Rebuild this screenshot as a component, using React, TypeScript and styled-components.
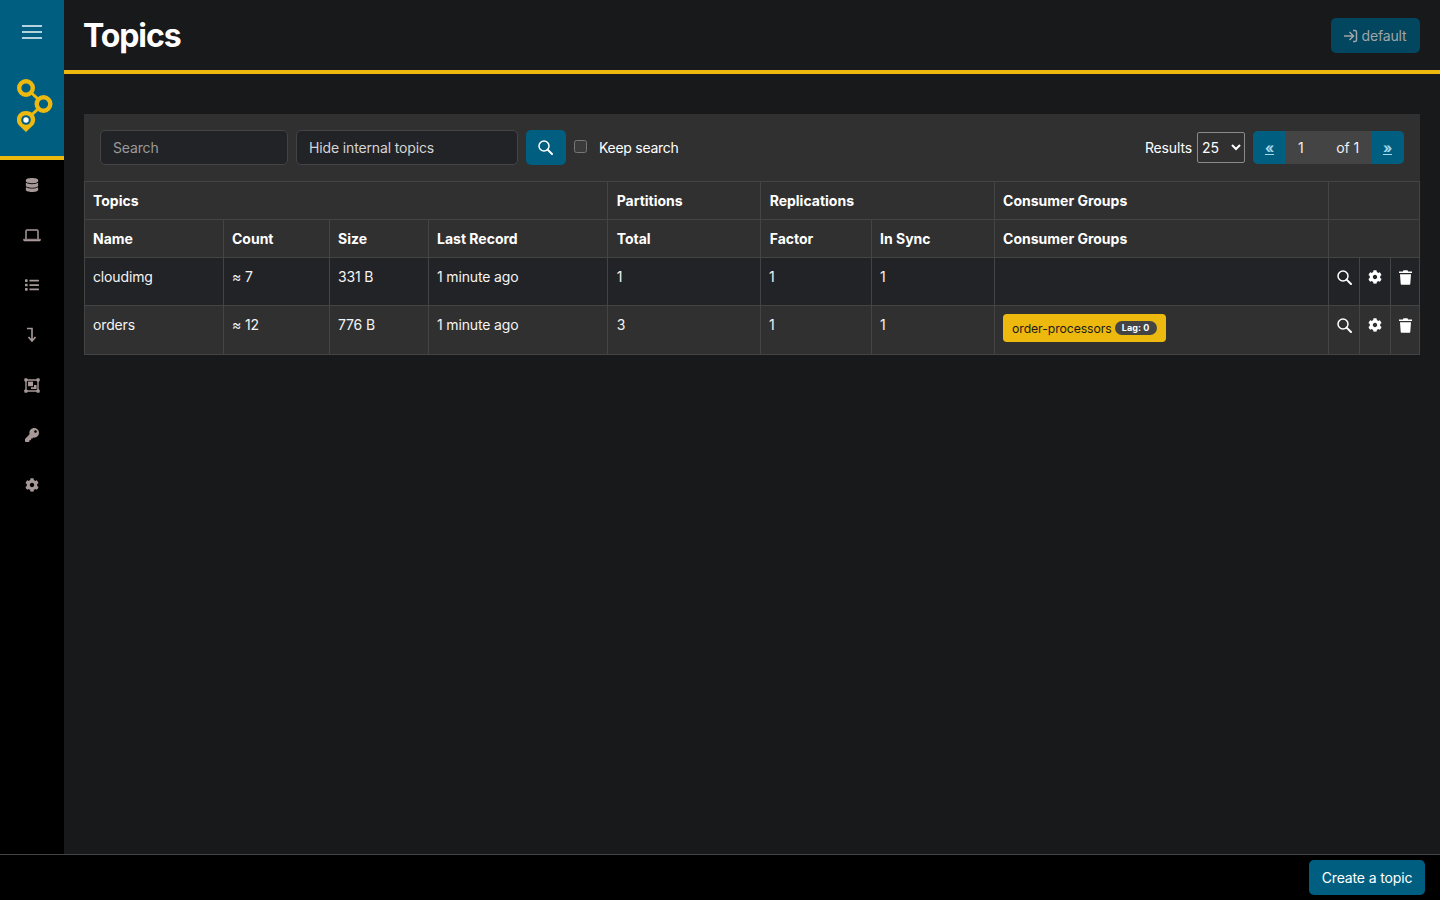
import React from "react";
import styled, { createGlobalStyle } from "styled-components";
import { FaDatabase, FaList, FaKey, FaCog } from "react-icons/fa";

const Global = createGlobalStyle`
  html, body { margin: 0; padding: 0; height: 100%; }
  body { background: #18191b; color: #fff; font-family: Inter, "Liberation Sans", sans-serif; font-size: 14px; line-height: 21px; letter-spacing: -0.14px; }
  * { box-sizing: border-box; }
`;

const Page = styled.div`
  display: grid;
  grid-template-columns: 64px 1fr;
  grid-template-rows: 854px 46px;
  width: 1440px;
  height: 900px;
  overflow: hidden;
`;

const Sidebar = styled.nav`
  background: #000;
  display: flex;
  flex-direction: column;
`;

const Brand = styled.div`
  height: 160px;
  background: #005f81;
  border-bottom: 4px solid #eeb90f;
  display: flex;
  flex-direction: column;
  align-items: center;
`;

const Burger = styled.div`
  margin-top: 25px;
  width: 20px;
  display: flex;
  flex-direction: column;
  gap: 4px;
  span { display: block; height: 2px; background: #b5d3de; }
`;

const Logo = styled.svg`
  margin: 40px 0 0 6px;
  width: 36px;
  height: 54px;
  flex: none;
`;

const NavList = styled.div`
  display: flex;
  flex-direction: column;
  align-items: center;
`;

const NavItem = styled.div`
  height: 50px;
  width: 64px;
  display: flex;
  align-items: center;
  justify-content: center;
  color: #a89999;
  font-size: 14px;
`;

const Main = styled.main`
  display: flex;
  flex-direction: column;
  min-width: 0;
`;

const Header = styled.header`
  height: 74px;
  flex: none;
  border-bottom: 4px solid #eeb90f;
  display: flex;
  align-items: flex-start;
  justify-content: space-between;
  padding: 18px 20px 0;
`;

const Title = styled.h1`
  margin: 0 0 0 -1px;
  font-size: 32px;
  line-height: 36px;
  font-weight: 700;
  letter-spacing: -1.1px;
`;

const ClusterButton = styled.button`
  height: 35px;
  width: 89px;
  border: 0;
  border-radius: 5px;
  background: #03465f;
  color: #a0a5a8;
  font: 14px Inter, sans-serif;
  letter-spacing: -0.14px;
  display: flex;
  align-items: center;
  justify-content: center;
  gap: 3px;
  padding: 0 1px 0 0;
`;

const Panel = styled.section`
  margin: 40px 20px 0;
  background: #303030;
  height: 241px;
`;

const Toolbar = styled.div`
  height: 67px;
  padding: 16px;
  display: flex;
  align-items: flex-start;
`;

const TextField = styled.input<{ $w: number }>`
  width: ${(p) => p.$w}px;
  height: 35px;
  margin-right: 8px;
  background: #222326;
  border: 1px solid #444;
  border-radius: 5px;
  color: #d5d5d5;
  font: 14px Inter, sans-serif;
  letter-spacing: -0.14px;
  padding: 0 12px;
  &::placeholder { color: #9a9a9a; opacity: 1; }
`;

const SearchButton = styled.button`
  width: 40px;
  height: 35px;
  background: #005f81;
  border: 0;
  border-radius: 5px;
  color: #fff;
  display: flex;
  align-items: center;
  justify-content: center;
  padding: 0 1px 0 0;
`;

const Keep = styled.label`
  display: flex;
  align-items: flex-start;
  margin-left: 8px;
  height: 35px;
  line-height: 35px;
  color: #fff;
  letter-spacing: -0.28px;
`;

const CheckBox = styled.span`
  width: 13px;
  height: 13px;
  margin: 10px 12px 0 0;
  border: 1px solid #777;
  border-radius: 2.5px;
  background: #3b3b3b;
`;

const Spacer = styled.div`
  flex: 1;
`;

const Results = styled.div`
  display: flex;
  align-items: center;
  height: 35px;
  margin-right: 8px;
  gap: 5px;
`;

const PageSelect = styled.select`
  width: 48px;
  height: 31px;
  background: #303030;
  color: #fff;
  border: 1px solid #8a8a8a;
  border-radius: 2px;
  font: 14px Inter, sans-serif;
  padding: 0;
`;

const Pager = styled.div`
  display: flex;
  height: 33px;
  margin-top: 1px;
  background: #444;
  border-radius: 5px;
  overflow: hidden;
  align-items: center;
  width: 151px;
`;

const PagerLink = styled.a`
  width: 33px;
  height: 33px;
  background: #005f81;
  color: #a5d6ea;
  display: flex;
  align-items: center;
  justify-content: center;
  text-decoration: underline;
  font-weight: 700;
  font-size: 14px;
`;

const PagerText = styled.span`
  flex: 1;
  display: flex;
  justify-content: space-between;
  padding: 0 12px;
  color: #f0f0f0;
`;

const Table = styled.table`
  width: 1335px;
  table-layout: fixed;
  border-collapse: collapse;
  border: 1px solid #444;
`;

const HeadCell = styled.th`
  height: 38px;
  border: 1px solid #444;
  padding: 0 8px;
  text-align: left;
  font-size: 14px;
  font-weight: 700;
  letter-spacing: 0;
`;

const NudgedHeadCell = styled(HeadCell)`
  padding-left: 8.6px;
`;

const Row = styled.tr<{ $dark?: boolean; $h: number }>`
  height: ${(p) => p.$h}px;
  background: ${(p) => (p.$dark ? "#222326" : "#303030")};
`;

const Cell = styled.td`
  border: 1px solid #444;
  padding: 8px 8px 0;
  vertical-align: top;
  color: #f4f4f4;
`;

const NudgedCell = styled(Cell)`
  padding-left: 8.6px;
`;

const ActionCell = styled.td`
  border: 1px solid #444;
  padding: 12px 0 0;
  vertical-align: top;
  text-align: center;
  color: #fff;
  line-height: 16px;
`;

const Badge = styled.span`
  display: inline-flex;
  align-items: center;
  height: 28px;
  padding: 0 9px;
  background: #eeb90f;
  color: #1b1b1b;
  border-radius: 4px;
  font-size: 12.25px;
  letter-spacing: -0.08px;
  gap: 3px;
  vertical-align: top;
`;

const Lag = styled.span`
  display: inline-block;
  background: #444;
  color: #fff;
  border-radius: 7px;
  font-size: 9px;
  line-height: 14px;
  font-weight: 700;
  padding: 0 7px;
  letter-spacing: 0.1px;
`;

const Footer = styled.footer`
  grid-column: 1 / 3;
  background: #000;
  border-top: 1px solid #444;
  display: flex;
  justify-content: flex-end;
  align-items: flex-start;
  padding: 5px 15px 0 0;
`;

const CreateButton = styled.button`
  width: 116px;
  height: 35px;
  background: #005f81;
  color: #fff;
  border: 0;
  border-radius: 5px;
  font: 14px Inter, sans-serif;
  letter-spacing: -0.14px;
  padding: 0;
`;

const LoginIcon = () => (
  <svg width="15" height="14" viewBox="0 0 15 14" fill="none" stroke="currentColor" strokeWidth="1.5">
    <path d="M1 7h9M6.5 3l4 4-4 4M10 1.5h2c1 0 1.5.6 1.5 1.5v8c0 .9-.5 1.5-1.5 1.5h-2" />
  </svg>
);

const SearchIcon = () => (
  <svg width="15" height="15" viewBox="0 0 15 15" fill="none" stroke="currentColor" style={{ verticalAlign: "top" }}>
    <circle cx="6" cy="6" r="5" strokeWidth="1.5" />
    <path d="M9.6 9.6 L14 14" strokeWidth="2" strokeLinecap="round" />
  </svg>
);

const TrashIcon = () => (
  <svg width="13" height="15" viewBox="0 0 13 15" fill="currentColor" style={{ verticalAlign: "top" }}>
    <path d="M4.5 0.3h4l.6 1.2H13v1.6H0V1.5h3.9zM1 4.2h11l-.7 9.6c0 .6-.5 1-1 1H2.7c-.5 0-1-.4-1-1z" />
  </svg>
);

const LaptopIcon = () => (
  <svg width="18" height="13" viewBox="0 0 18 13" fill="none" stroke="currentColor">
    <path d="M3 10V2c0-.6.4-1 1-1h10c.6 0 1 .4 1 1v8" strokeWidth="1.5" />
    <path d="M0.5 10.2h17v.8c0 .6-.5 1-1 1h-15c-.5 0-1-.4-1-1z" fill="currentColor" strokeWidth="0.6" />
  </svg>
);

const DownArrow = () => (
  <svg width="10" height="16" viewBox="0 0 10 16" fill="none" stroke="currentColor" strokeWidth="1.6">
    <path d="M0 1.5h5v12M1.5 10l3.5 4 3.5-4" />
  </svg>
);

const UngroupIcon = () => (
  <svg width="16" height="15" viewBox="0 0 16 15" fill="currentColor">
    <path d="M2 2h12v11H2z" fill="none" stroke="currentColor" strokeWidth="1.4" />
    <rect x="0.3" y="0.3" width="3.2" height="3.2" rx="0.8" />
    <rect x="12.5" y="0.3" width="3.2" height="3.2" rx="0.8" />
    <rect x="0.3" y="11.5" width="3.2" height="3.2" rx="0.8" />
    <rect x="12.5" y="11.5" width="3.2" height="3.2" rx="0.8" />
    <rect x="4" y="3.6" width="5" height="4.6" />
    <path d="M10 7h2.6v4H7V9.2h3z" />
  </svg>
);

const topics = [
  { name: "cloudimg", count: "≈ 7", size: "331 B", total: "1", h: 48, dark: true },
  { name: "orders", count: "≈ 12", size: "776 B", total: "3", h: 49, dark: false, group: true },
];

const widths = [139, 106, 99, 179, 153, 111, 123, 334, 31, 31, 29];

export default function App() {
  return (
    <Page>
      <Global />
      <Sidebar>
        <Brand>
          <Burger><span /><span /><span /></Burger>
          <Logo viewBox="0 0 36 54" fill="none">
            <path d="M9 9 L26.5 25 L9 41" stroke="#eeb90f" strokeWidth="3" />
            <circle cx="9" cy="9" r="6.8" stroke="#eeb90f" strokeWidth="4.4" fill="#005f81" />
            <circle cx="26.5" cy="25" r="6.8" stroke="#eeb90f" strokeWidth="4.4" fill="#005f81" />
            <path d="M9 53 L2.2 46.6 C-2.5 41.5 0 32 9 32 C18 32 20.5 41.5 15.8 46.6 Z" fill="#eeb90f" />
            <circle cx="9" cy="41" r="4.8" fill="#005f81" />
            <circle cx="9" cy="41" r="2.7" fill="#fff" />
          </Logo>
        </Brand>
        <NavList>
          <NavItem><FaDatabase /></NavItem>
          <NavItem><LaptopIcon /></NavItem>
          <NavItem><FaList /></NavItem>
          <NavItem><DownArrow /></NavItem>
          <NavItem><UngroupIcon /></NavItem>
          <NavItem><FaKey /></NavItem>
          <NavItem><FaCog /></NavItem>
        </NavList>
      </Sidebar>
      <Main>
        <Header>
          <Title>Topics</Title>
          <ClusterButton><LoginIcon />default</ClusterButton>
        </Header>
        <Panel>
          <Toolbar>
            <TextField $w={188} placeholder="Search" readOnly />
            <TextField $w={222} defaultValue="Hide internal topics" readOnly />
            <SearchButton><SearchIcon /></SearchButton>
            <Keep><CheckBox />Keep search</Keep>
            <Spacer />
            <Results>
              Results
              <PageSelect defaultValue="25"><option>25</option></PageSelect>
            </Results>
            <Pager>
              <PagerLink>«</PagerLink>
              <PagerText><span>1</span><span>of 1</span></PagerText>
              <PagerLink>»</PagerLink>
            </Pager>
          </Toolbar>
          <Table>
            <colgroup>{widths.map((w, i) => <col key={i} width={w} />)}</colgroup>
            <thead>
              <tr>
                <HeadCell colSpan={4}>Topics</HeadCell>
                <NudgedHeadCell>Partitions</NudgedHeadCell>
                <NudgedHeadCell colSpan={2}>Replications</NudgedHeadCell>
                <HeadCell>Consumer Groups</HeadCell>
                <HeadCell colSpan={3} />
              </tr>
              <tr>
                <HeadCell>Name</HeadCell>
                <HeadCell>Count</HeadCell>
                <HeadCell>Size</HeadCell>
                <HeadCell>Last Record</HeadCell>
                <NudgedHeadCell>Total</NudgedHeadCell>
                <NudgedHeadCell>Factor</NudgedHeadCell>
                <HeadCell>In Sync</HeadCell>
                <HeadCell>Consumer Groups</HeadCell>
                <HeadCell colSpan={3} />
              </tr>
            </thead>
            <tbody>
              {topics.map((t) => (
                <Row key={t.name} $dark={t.dark} $h={t.h}>
                  <Cell>{t.name}</Cell>
                  <Cell>{t.count}</Cell>
                  <Cell>{t.size}</Cell>
                  <Cell>1 minute ago</Cell>
                  <NudgedCell>{t.total}</NudgedCell>
                  <Cell>1</Cell>
                  <Cell>1</Cell>
                  <Cell>{t.group && <Badge>order-processors<Lag>Lag: 0</Lag></Badge>}</Cell>
                  <ActionCell><SearchIcon /></ActionCell>
                  <ActionCell><FaCog size={14} style={{ verticalAlign: "top" }} /></ActionCell>
                  <ActionCell><TrashIcon /></ActionCell>
                </Row>
              ))}
            </tbody>
          </Table>
        </Panel>
      </Main>
      <Footer><CreateButton>Create a topic</CreateButton></Footer>
    </Page>
  );
}
